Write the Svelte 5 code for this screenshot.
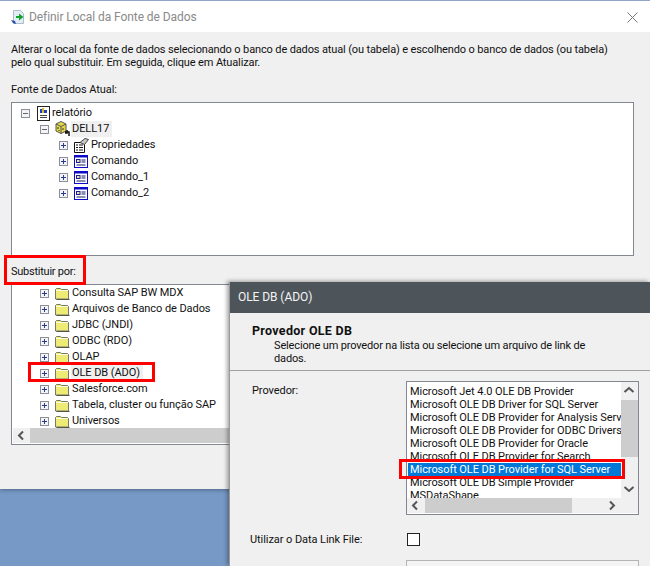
<script>
  const topTree = [
    { text: 'relatório', level: 0, open: true, icon: 'report' },
    { text: 'DELL17', level: 1, open: true, icon: 'db', hl: true },
    { text: 'Propriedades', level: 2, icon: 'props' },
    { text: 'Comando', level: 2, icon: 'cmd' },
    { text: 'Comando_1', level: 2, icon: 'cmd' },
    { text: 'Comando_2', level: 2, icon: 'cmd' }
  ];
  const bottomTree = ['Consulta SAP BW MDX', 'Arquivos de Banco de Dados', 'JDBC (JNDI)', 'ODBC (RDO)', 'OLAP', 'OLE DB (ADO)', 'Salesforce.com', 'Tabela, cluster ou função SAP', 'Universos'];
  const providers = ['Microsoft Jet 4.0 OLE DB Provider', 'Microsoft OLE DB Driver for SQL Server', 'Microsoft OLE DB Provider for Analysis Services', 'Microsoft OLE DB Provider for ODBC Drivers', 'Microsoft OLE DB Provider for Oracle', 'Microsoft OLE DB Provider for Search', 'Microsoft OLE DB Provider for SQL Server', 'Microsoft OLE DB Simple Provider', 'MSDataShape'];
</script>

{#snippet expander(open)}
  <svg class="exp" width="9" height="9" viewBox="0 0 9 9">
    <rect x=".5" y=".5" width="8" height="8" fill="#f4f4f6" stroke="#8b8f9c" />
    <path d={open ? 'M2 4.5h5' : 'M2 4.5h5M4.5 2v5'} stroke={open ? '#666' : '#2a3a8c'} />
  </svg>
{/snippet}

{#snippet folder()}
  <svg class="ico" width="16" height="14" viewBox="0 0 16 14">
    <defs>
      <pattern id="dither" width="2" height="2" patternUnits="userSpaceOnUse">
        <rect width="2" height="2" fill="#f6f04a" />
        <rect width="1" height="1" fill="#e6e6a0" />
        <rect x="1" y="1" width="1" height="1" fill="#e6e6a0" />
      </pattern>
    </defs>
    <path d="M1.500 13V3.500l1-1h4l1 1h6l1 1V13z" fill="url(#dither)" stroke="#77776a" />
    <path d="M2 4.500h12" stroke="#fdfbe0" />
    <path d="M2.500 13.500h13" stroke="#55554a" />
  </svg>
{/snippet}

{#snippet treeIcon(kind)}
  {#if kind === 'report'}
    <svg class="ico" width="13" height="15" viewBox="0 0 13 15">
      <rect x=".5" y=".5" width="12" height="14" fill="#fff" stroke="#222" />
      <rect x="3" y="3" width="2" height="4" fill="#1a3fc0" /><rect x="5" y="2" width="2" height="5" fill="#d8b820" /><rect x="7" y="4" width="3" height="3" fill="#1a3fc0" />
      <path d="M3 9.500h7M3 11.500h7" stroke="#444" />
    </svg>
  {:else if kind === 'db'}
    <svg class="ico" width="16" height="16" viewBox="0 0 16 16">
      <path d="M1 3l5-2.500 5 2.500v7l-5 2.500-5-2.500z" fill="#e5d94a" stroke="#555" />
      <path d="M1 3l5 2.500 5-2.500M6 5.500v7" stroke="#555" fill="none" />
      <path d="M3 6v2M8 7v2M4 9v1" stroke="#333" />
      <path d="M10 11h4v4M12 9v3h-2" stroke="#111" stroke-width="1.500" fill="none" />
    </svg>
  {:else if kind === 'props'}
    <svg class="ico" width="15" height="15" viewBox="0 0 15 15">
      <path d="M.5 4.500h10v10h-10z" fill="#fff" stroke="#111" />
      <path d="M2 7h2M2 9.500h2M2 12h2M5 7h4M5 9.500h4M5 12h4" stroke="#111" />
      <path d="M6 4.500l5-4 3.500 1-4 5z" fill="#c9c9c9" stroke="#444" />
    </svg>
  {:else}
    <svg class="ico" width="14" height="13" viewBox="0 0 14 13">
      <rect x=".5" y=".5" width="13" height="12" fill="#fff" stroke="#0a0ac8" />
      <path d="M1 1h12v1.500H1z" fill="#0a0ac8" />
      <rect x="2.500" y="4.500" width="3.500" height="3" fill="#e8e0a0" stroke="#1a1a90" />
      <path d="M7.500 5h4M7.500 7h4M2.500 10h9" stroke="#1a1a60" />
    </svg>
  {/if}
{/snippet}

<div class="desktop">
  <section class="win">
    <header class="titlebar">
      <svg width="16" height="16" viewBox="0 0 16 16">
        <path d="M3.500 1.500h7l3 3v10h-10z" fill="#e4edf6" stroke="#a9bcd0" />
        <path d="M6 7h3V4.500L13.500 8 9 11.500V9H6z" fill="#12a52e" />
        <path d="M1 11l4 1 1 3-3-1z" fill="#1f4fa8" />
      </svg>
      <span>Definir Local da Fonte de Dados</span>
      <svg class="close" width="11" height="11" viewBox="0 0 11 11"><path d="M.5.500l10 10M10.500.500l-10 10" stroke="#777" fill="none" /></svg>
    </header>
    <div class="body">
      <p class="intro">Alterar o local da fonte de dados selecionando o banco de dados atual (ou tabela) e escolhendo o banco de dados (ou tabela)<br />pelo qual substituir. Em seguida, clique em Atualizar.</p>
      <div class="lbl current">Fonte de Dados Atual:</div>
      <div class="tree top">
        {#each topTree as r}
          <div class="row lv{r.level}">
            {@render expander(r.open)}
            <span class="icon-slot s{r.level}">{@render treeIcon(r.icon)}</span>
            <span class="txt" class:hl={r.hl}>{r.text}</span>
          </div>
        {/each}
      </div>
      <div class="lbl replace">Substituir por:</div>
      <div class="tree bottom">
        <div class="rows">
          {#each bottomTree as t}
            <div class="row lv1">
              {@render expander(false)}
              <span class="icon-slot sf">{@render folder()}</span>
              <span class="txt" class:hl={t === 'OLE DB (ADO)'}>{t}</span>
            </div>
          {/each}
        </div>
        <div class="hbar">
          <svg class="arrow" width="17" height="15" viewBox="0 0 17 15"><path d="M10 3.500L6 7.500l4 4" stroke="#555" stroke-width="2" fill="none" /></svg>
          <div class="hthumb"></div>
        </div>
      </div>
    </div>
  </section>

  <div class="mark m1"></div>
  <div class="mark m2"></div>

  <section class="dlg">
    <header class="dlgtitle">OLE DB (ADO)</header>
    <div class="dlghead">
      <h2>Provedor OLE DB</h2>
      <p>Selecione um provedor na lista ou selecione um arquivo de link de<br />dados.</p>
    </div>
    <div class="dlgbody">
      <div class="provrow">
        <span class="provlbl">Provedor:</span>
        <div class="listbox">
          <div class="listmain">
            <div class="items">
              {#each providers as p}
                <div class="item" class:sel={p.endsWith('SQL Server') && p.includes('Provider for')}>{p}</div>
              {/each}
            </div>
            <div class="vbar">
              <svg width="16" height="16" viewBox="0 0 16 16"><path d="M3.500 10l4.500-4 4.500 4" stroke="#555" stroke-width="2" fill="none" /></svg>
              <div class="vthumb"></div>
              <svg class="vdown" width="16" height="16" viewBox="0 0 16 16"><path d="M3.500 6l4.500 4 4.500-4" stroke="#555" stroke-width="2" fill="none" /></svg>
            </div>
          </div>
          <div class="lhbar">
            <svg width="16" height="15" viewBox="0 0 16 15"><path d="M10 3.500L6 7.500l4 4" stroke="#555" stroke-width="2" fill="none" /></svg>
            <div class="lhthumb"></div>
            <svg class="lhright" width="16" height="15" viewBox="0 0 16 15"><path d="M6 3.500l4 4-4 4" stroke="#555" stroke-width="2" fill="none" /></svg>
          </div>
        </div>
      </div>
      <div class="linkrow">
        <span class="linklbl">Utilizar o Data Link File:</span>
        <span class="check"></span>
      </div>
      <div class="nextbox"></div>
    </div>
    <div class="mark m3"></div>
  </section>
</div>

<style>
  :global(body) { margin: 0; }
  .desktop {
    position: relative; width: 650px; height: 566px; overflow: hidden;
    background: #7799c5; color: #111;
    font-family: "Roboto", "Liberation Sans", sans-serif; font-size: 11px; letter-spacing: -.07px; line-height: 13px;
  }
  .win {
    height: 488px; border-top: 1px solid #8fa6c8; background: #f0f0f0;
    box-shadow: 0 1px 4px rgba(30, 40, 60, .45); display: flex; flex-direction: column;
  }
  .titlebar {
    height: 31px; flex: none; background: #fff; display: flex; align-items: center;
    gap: 3px; padding: 1px 12px 0 10px; box-sizing: border-box; color: #8a8a8a; font-size: 12px;
  }
  .close { margin-left: auto; }
  .body { padding: 11px 16px 0 11px; position: relative; }
  .intro { margin: 0; letter-spacing: -.13px; }
  .lbl { height: 13px; }
  .current { margin-top: 14px; }
  .tree { background: #fff; border: 1px solid #828790; }
  .top { margin-top: 6px; height: 150px; padding-top: 2px; box-sizing: content-box; }
  .replace { margin-top: 9px; letter-spacing: -.25px; }
  .bottom { margin-top: 6px; height: 159px; display: flex; flex-direction: column; overflow: hidden; }
  .rows { flex: 1; overflow: hidden; }
  .row { height: 16px; display: flex; align-items: center; white-space: nowrap; }
  .lv0 { padding-left: 9px; }
  .lv1 { padding-left: 28px; }
  .lv2 { padding-left: 47px; }
  .exp { flex: none; }
  .icon-slot { display: flex; align-items: center; justify-content: center; flex: none; }
  .s0 { width: 15px; margin-left: 6px; margin-right: 0; }
  .s1 { width: 17px; margin-left: 5px; margin-right: 0; }
  .s2 { width: 16px; margin-left: 5px; margin-right: 1px; }
  .sf { width: 16px; margin-left: 5px; margin-right: 1px; }
  .txt { padding: 0 1px; height: 16px; line-height: 16px; }
  .hl { background: #f0f0f0; padding-right: 3px; }
  .hbar { height: 15px; flex: none; margin: 0 1px 1px; background: #f0f0f0; display: flex; }
  .hthumb { flex: 1; background: #cdcdcd; }
  .mark { position: absolute; border: 3px solid #f00; box-sizing: border-box; pointer-events: none; }
  .m1 { left: 4px; top: 255px; width: 82px; height: 30px; }
  .m2 { left: 28px; top: 362px; width: 127px; height: 20px; }
  .m3 { left: 169px; top: 177px; width: 226px; height: 20px; }
  .dlg {
    position: absolute; left: 229px; top: 282px; width: 421px; height: 284px;
    background: #f0f0f0; box-shadow: -2px -1px 4px rgba(30, 30, 30, .4);
    border-left: 1px solid #9a9a9a; box-sizing: border-box;
  }
  .dlgtitle {
    height: 31px; background: #4d555b; color: #f4f4f4; display: flex; align-items: center;
    padding-left: 8px; font-size: 12px;
  }
  .dlghead { height: 57px; border-bottom: 1px solid #a0a0a0; box-sizing: content-box; position: relative; }
  h2 { margin: 0; font-size: 12.500px; letter-spacing: .3px; font-weight: 700; padding: 11px 0 0 22px; line-height: 13px; }
  .dlghead p { margin: 2px 0 0 44px; line-height: 13px; letter-spacing: -.15px; }
  .dlgbody { padding: 10px 10px 0 20px; }
  .provrow { display: flex; align-items: flex-start; }
  .provlbl { width: 154px; flex: none; padding: 3px 0 0 2px; }
  .listbox { width: 233px; height: 134px; flex: none; box-sizing: border-box; border: 1px solid #828790; background: #fff; display: flex; flex-direction: column; }
  .listmain { display: flex; height: 116px; }
  .items { width: 214px; flex: none; overflow: hidden; white-space: nowrap; height: 116px; padding-top: 3px; box-sizing: border-box; }
  .item { height: 13px; line-height: 13px; padding-left: 3px; }
  .sel { background: #0078d7; color: #fff; margin-left: 1px; padding-left: 2px; height: 14px; margin-bottom: -1px; }
  .vbar { width: 17px; flex: none; background: #f0f0f0; display: flex; flex-direction: column; height: 116px; }
  .vthumb { height: 57px; background: #cdcdcd; margin-top: 2px; }
  .vdown { margin-top: auto; margin-bottom: 1px; }
  .lhbar { height: 15px; flex: none; background: #f0f0f0; display: flex; margin-top: 0; }
  .lhthumb { width: 147px; background: #cdcdcd; margin-left: 2px; }
  .lhright { margin-left: auto; margin-right: 18px; }
  .linkrow { display: flex; align-items: center; margin-top: 18px; height: 13px; }
  .linklbl { width: 157px; flex: none; }
  .check { width: 13px; height: 13px; box-sizing: border-box; border: 1px solid #222; background: #fff; margin-left: 0; }
  .nextbox { margin: 14px 0 0 156px; width: 233px; height: 20px; border: 1px solid #b5b5b5; background: #f4f4f4; box-sizing: border-box; }
</style>
